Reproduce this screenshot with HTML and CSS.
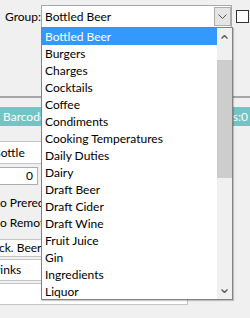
FILE: index.html
```html
<!DOCTYPE html>
<html lang="en">
<head>
    <meta charset="UTF-8">
    <meta name="viewport" content="width=device-width, initial-scale=1.0">
    <title>Group</title>
    <link rel="stylesheet" href="styles.css">
</head>
<body>
    <div class="window">
        <!-- top pane with the group picker -->
        <div class="top-pane">
            <div class="group-row">
                <span class="group-label">Group:</span>
                <div class="combo">
                    <span class="combo-text">Bottled Beer</span>
                    <span class="combo-btn">
                        <svg width="9" height="5" viewBox="0 0 9 5"><polyline points="0.5,0.5 4.5,4.5 8.5,0.5" fill="none" stroke="#555" stroke-width="1"/></svg>
                    </span>
                </div>
                <span class="check"></span>
            </div>
        </div>

        <div class="grid-head">
            <span>Barcode</span>
            <span>Items:0</span>
        </div>

        <div class="fields">
            <div class="field name">Bottle</div>
            <div class="field num">0</div>
            <div class="opt">No Prerequisite</div>
            <div class="opt">No Remote Print</div>
            <div class="field pack">Pack. Beer</div>
            <div class="field cat">Drinks</div>
            <div class="memo"></div>
        </div>

        <!-- open dropdown list -->
        <div class="dropdown">
            <ul class="items">
                <li class="selected">Bottled Beer</li>
                <li>Burgers</li>
                <li>Charges</li>
                <li>Cocktails</li>
                <li>Coffee</li>
                <li>Condiments</li>
                <li>Cooking Temperatures</li>
                <li>Daily Duties</li>
                <li>Dairy</li>
                <li>Draft Beer</li>
                <li>Draft Cider</li>
                <li>Draft Wine</li>
                <li>Fruit Juice</li>
                <li>Gin</li>
                <li>Ingredients</li>
                <li>Liquor</li>
            </ul>
            <div class="scrollbar">
                <span class="arrow">
                    <svg width="7" height="4" viewBox="0 0 7 4"><polyline points="0.5,3.5 3.5,0.5 6.5,3.5" fill="none" stroke="#606060" stroke-width="1.5"/></svg>
                </span>
                <span class="thumb"></span>
                <span class="arrow down">
                    <svg width="7" height="4" viewBox="0 0 7 4"><polyline points="0.5,0.5 3.5,3.5 6.5,0.5" fill="none" stroke="#606060" stroke-width="1.5"/></svg>
                </span>
            </div>
        </div>
    </div>
</body>
</html>
```

FILE: styles.css
```css
body {
    margin: 0;
    font-family: Lato, "Noto Sans", sans-serif;
    font-size: 12px;
    color: #000;
    background-color: #f0f0f0;
}
.window {
    position: relative;
    width: 250px;
    height: 318px;
    overflow: hidden;
}
.top-pane {
    height: 96px;
    border-bottom: 2px solid #a6a6a6;
}
.group-row {
    display: flex;
    align-items: flex-start;
    padding-top: 5px;
}
.group-label {
    width: 36px;
    margin-left: 5px;
    line-height: 23px;
}
.combo {
    display: flex;
    align-items: center;
    box-sizing: border-box;
    width: 191px;
    height: 23px;
    background: white;
    border: 1px solid #a8a8a8;
}
.combo-text {
    flex: 1;
    padding-left: 3px;
}
.combo-btn {
    display: flex;
    align-items: center;
    justify-content: center;
    box-sizing: border-box;
    width: 17px;
    height: 19px;
    background: #e5e5e5;
    border: 1px solid #adadad;
}
.check {
    box-sizing: border-box;
    width: 13px;
    height: 13px;
    margin: 5px 0 0 4px;
    background: white;
    border: 1px solid #333;
}
.grid-head {
    display: flex;
    justify-content: space-between;
    height: 19px;
    margin-top: 9px;
    padding: 0 2px 0 3px;
    line-height: 19px;
    color: white;
    background-color: #72c5c5;
}
.fields {
    padding-top: 15px;
}
.field {
    box-sizing: border-box;
    background: white;
    border: 1px solid #c4c4c4;
    white-space: nowrap;
    overflow: hidden;
}
.name {
    width: 220px;
    height: 23px;
    margin-left: -2px;
    line-height: 21px;
    text-indent: -6px;
}
.num {
    width: 58px;
    height: 18px;
    margin: 3px 0 0 -20px;
    padding-right: 4px;
    line-height: 16px;
    text-align: right;
    border-color: #adadad;
}
.opt {
    width: 50px;
    height: 18px;
    margin-left: -9px;
    line-height: 18px;
    white-space: nowrap;
    overflow: hidden;
}
.num + .opt {
    margin-top: 9px;
}
.opt + .opt {
    margin-top: 2px;
}
.pack {
    width: 200px;
    height: 18px;
    margin: 7px 0 0 -2px;
    line-height: 16px;
    text-indent: -13px;
}
.cat {
    width: 200px;
    height: 22px;
    margin: 2px 0 0 -2px;
    line-height: 20px;
    text-indent: -12px;
}
.memo {
    box-sizing: border-box;
    width: 190px;
    height: 22px;
    margin: 2px 0 0 -2px;
    background: white;
    border: 1px solid #c4c4c4;
}
.dropdown {
    position: absolute;
    left: 41px;
    top: 27px;
    display: flex;
    box-sizing: border-box;
    width: 192px;
    height: 273px;
    background: white;
    border: 1px solid #828282;
    box-shadow: 1px 1px 1px rgba(0,0,0,0.2);
    overflow: hidden;
}
.items {
    flex: 1;
    margin: 0;
    padding: 0;
    list-style: none;
}
.items li {
    height: 17px;
    padding-left: 3px;
    line-height: 17px;
    white-space: nowrap;
}
.items .selected {
    color: white;
    background-color: #3399ff;
}
.scrollbar {
    display: flex;
    flex-direction: column;
    width: 15px;
    background: #f0f0f0;
}
.arrow {
    display: flex;
    align-items: center;
    justify-content: center;
    height: 17px;
    flex-shrink: 0;
}
.arrow.down {
    margin-top: auto;
}
.thumb {
    height: 118px;
    margin-top: 15px;
    background: #cdcdcd;
}
```
